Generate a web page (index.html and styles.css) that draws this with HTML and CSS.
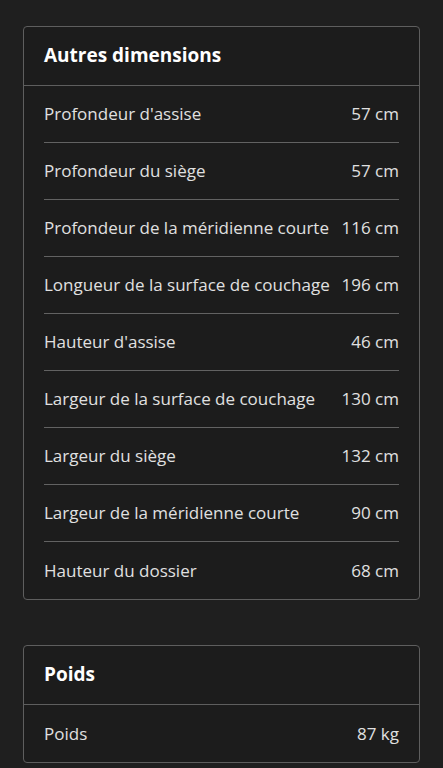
FILE: index.html
```html
<!DOCTYPE html>
<html lang="fr">
<head>
  <meta charset="UTF-8">
  <meta name="viewport" content="width=device-width, initial-scale=1.0">
  <title>Dimensions</title>
  <link rel="stylesheet" href="styles.css">
</head>
<body>
  <main class="specs">
    <section class="spec-card">
      <h2 class="spec-title">Autres dimensions</h2>
      <ul class="spec-list">
        <li class="spec-row"><span>Profondeur d'assise</span><span>57 cm</span></li>
        <li class="spec-row"><span>Profondeur du siège</span><span>57 cm</span></li>
        <li class="spec-row"><span>Profondeur de la méridienne courte</span><span>116 cm</span></li>
        <li class="spec-row"><span>Longueur de la surface de couchage</span><span>196 cm</span></li>
        <li class="spec-row"><span>Hauteur d'assise</span><span>46 cm</span></li>
        <li class="spec-row"><span>Largeur de la surface de couchage</span><span>130 cm</span></li>
        <li class="spec-row"><span>Largeur du siège</span><span>132 cm</span></li>
        <li class="spec-row"><span>Largeur de la méridienne courte</span><span>90 cm</span></li>
        <li class="spec-row"><span>Hauteur du dossier</span><span>68 cm</span></li>
      </ul>
    </section>

    <section class="spec-card">
      <h2 class="spec-title">Poids</h2>
      <ul class="spec-list">
        <li class="spec-row"><span>Poids</span><span>87 kg</span></li>
      </ul>
    </section>
  </main>
</body>
</html>
```

FILE: styles.css
```css
body {
  font-family: "Open Sans", "Noto Sans", sans-serif;
  background: #1f1f1f;
  color: #e0e0e0;
  margin: 0;
  padding: 26px 23px 0;
}
.specs {
  display: flex;
  flex-direction: column;
  gap: 45px;
}
.spec-card {
  background: #1c1c1c;
  border: 1px solid #5e5e5e;
  border-radius: 4px;
}
.spec-title {
  margin: 0;
  padding: 0 20px;
  height: 58px;
  line-height: 57px;
  font-size: 19px;
  font-weight: 700;
  color: #ffffff;
  border-bottom: 1px solid #5e5e5e;
}
.spec-list {
  list-style: none;
  margin: 0;
  padding: 0 20px;
}
.spec-row {
  display: flex;
  justify-content: space-between;
  align-items: center;
  gap: 5px;
  box-sizing: border-box;
  height: 57px;
  padding-bottom: 1px;
  font-size: 17px;
  border-bottom: 1px solid #626262;
}
.spec-row:last-child {
  border-bottom: none;
}
```
